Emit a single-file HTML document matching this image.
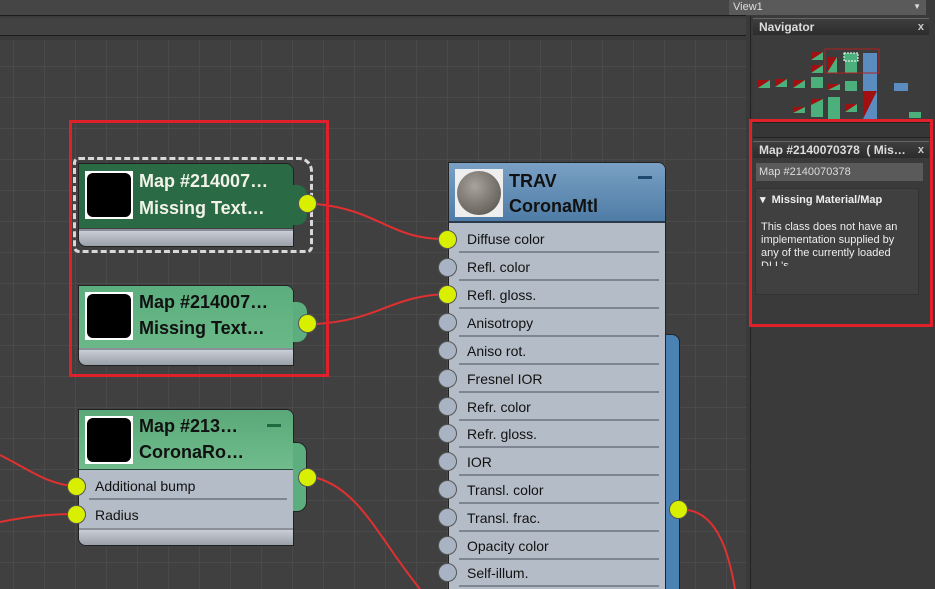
<!DOCTYPE html>
<html style="width:935px;height:589px;overflow:hidden"><head><meta charset="utf-8"><style>
*{margin:0;padding:0;box-sizing:border-box}
body{width:935px;height:589px;overflow:hidden;background:#3a3a3a;font-family:"Liberation Sans",sans-serif;position:relative}
.abs{position:absolute}
#canvas{left:0;top:40px;width:746px;height:549px;background-color:#404040;
background-image:linear-gradient(to right,#4a4a4a 1px,transparent 1px),linear-gradient(to bottom,#4a4a4a 1px,transparent 1px);
background-size:31px 31px;background-position:13px 26px}
.node{position:absolute;border:1px solid #222;border-radius:0 8px 0 8px;overflow:hidden}
.hdr{position:absolute;left:0;right:0;top:0}
.thumb{position:absolute;left:6px;top:7px;width:48px;height:48px;background:#fff;padding:2px}
.thumb div{width:100%;height:100%;background:#000;border-radius:6px}
.t{position:absolute;left:60px;font-weight:bold;font-size:18px;line-height:27px;white-space:nowrap}
.foot{position:absolute;left:0;right:0;height:17px;background:linear-gradient(#c9ced5,#9aa0a8);border-top:2px solid #8a9099}
.sock{position:absolute;width:19px;height:19px;border-radius:50%;border:1px solid #555}
.y{background:#d8f000}
.g{background:#a8b4c4}
.row{position:absolute;left:0;right:0;height:28px;font-size:14px;color:#111;padding-left:8px;line-height:28px;border-bottom:2px solid #7c8590;margin:0 6px 0 10px}
.ph{position:absolute;left:0;right:0;height:17px;background:linear-gradient(#3e3e3e,#2c2c2c);color:#ddd;font-size:12px;font-weight:bold;padding-left:6px;line-height:16px;border-top:1px solid #666}
.x{position:absolute;right:5px;top:0;font-size:11px;color:#ccc}
</style></head><body>
<div class="abs" style="left:0;top:0;width:746px;height:16px;background:#454545;border-bottom:1px solid #1c1c1c"></div>
<div class="abs" style="left:0;top:18px;width:746px;height:18px;background:#424242;border-bottom:1px solid #1c1c1c"></div>
<div class="abs" style="left:729px;top:0;width:197px;height:15px;background:#5a5a5a;color:#ddd;font-size:11px;padding-left:4px;line-height:14px">View1<span style="position:absolute;right:5px;font-size:8px">▼</span></div>
<div id="canvas" class="abs"></div>

<svg class="abs" style="left:0;top:0" width="746" height="589">
<g fill="none" stroke="#e03030" stroke-width="2">
<path d="M316 204 C380 210 390 240 447 239"/>
<path d="M316 324 C380 320 390 296 447 294"/>
<path d="M0 455 C30 470 50 486 77 486"/>
<path d="M0 522 C30 516 50 514 77 514"/>
<path d="M317 478 C360 490 380 540 420 589"/>
<path d="M688 510 C720 515 730 560 735 589"/>
</g></svg>

<div class="abs" style="left:73px;top:157px;width:240px;height:96px;border:3px dashed #d8d8d8;border-radius:6px 14px 6px 6px"></div>
<div class="node" style="left:78px;top:163px;width:216px;height:84px">
<div class="hdr" style="height:64px;background:#2a6a45"></div>
<div class="thumb"><div></div></div>
<div class="t" style="top:4px;color:#f2f2e8">Map #214007…</div>
<div class="t" style="top:31px;color:#f2f2e8">Missing Text…</div>
<div class="foot" style="top:65px"></div>
</div>
<div class="abs" style="left:293px;top:185px;width:14px;height:40px;background:#2a6a45;border-radius:0 10px 10px 0"></div>
<div class="sock y" style="left:298px;top:194px"></div>

<div class="node" style="left:78px;top:285px;width:216px;height:81px">
<div class="hdr" style="height:62px;background:linear-gradient(#5cae7e,#6ab888)"></div>
<div class="thumb" style="top:6px"><div></div></div>
<div class="t" style="top:3px;color:#111">Map #214007…</div>
<div class="t" style="top:29px;color:#111">Missing Text…</div>
<div class="foot" style="top:62px"></div>
</div>
<div class="abs" style="left:293px;top:302px;width:14px;height:40px;background:#5cae7e;border-radius:0 10px 10px 0"></div>
<div class="sock y" style="left:298px;top:314px"></div>

<div class="node" style="left:78px;top:409px;width:216px;height:137px;background:#b4bcc7">
<div class="hdr" style="height:60px;background:linear-gradient(#5aa878,#70bc8c);border-bottom:1px solid #2a4a3a"></div>
<div class="thumb" style="top:6px"><div></div></div>
<div class="t" style="top:3px;color:#111">Map #213…</div>
<div class="t" style="top:29px;color:#111">CoronaRo…</div>
<div class="abs" style="left:188px;top:14px;width:14px;height:3px;background:#1e6a40"></div>
<div class="row" style="top:62px;padding-left:6px">Additional bump</div>
<div class="row" style="top:91px;border-bottom:none;padding-left:6px">Radius</div>
<div class="foot" style="top:118px"></div>
</div>
<div class="abs" style="left:293px;top:442px;width:14px;height:70px;background:#5cae7e;border-radius:0 10px 10px 0;border:1px solid #222;border-left:none"></div>
<div class="sock y" style="left:298px;top:468px"></div>
<div class="sock y" style="left:67px;top:477px"></div>
<div class="sock y" style="left:67px;top:505px"></div>

<div class="abs" style="left:662px;top:334px;width:18px;height:260px;background:#4a82b4;border:1px solid #222;border-radius:0 8px 0 0"></div>
<div class="node" style="left:448px;top:162px;width:218px;height:440px;background:#b4bcc7">
<div class="hdr" style="height:60px;background:linear-gradient(#7aa0c4,#4e7ca6);border-bottom:2px solid #2a3a4a"></div>
<div class="thumb" style="top:6px;background:#eee"><div style="border-radius:50%;background:radial-gradient(circle at 40% 35%,#a8a49c,#6a6660 70%,#3a3836)"></div></div>
<div class="t" style="top:5px;color:#111">TRAV</div>
<div class="t" style="top:30px;color:#111">CoronaMtl</div>
<div class="abs" style="left:189px;top:13px;width:14px;height:3px;background:#1e4a70"></div>
<div class="row" style="top:62px">Diffuse color</div>
<div class="row" style="top:90px">Refl. color</div>
<div class="row" style="top:118px">Refl. gloss.</div>
<div class="row" style="top:146px">Anisotropy</div>
<div class="row" style="top:174px">Aniso rot.</div>
<div class="row" style="top:202px">Fresnel IOR</div>
<div class="row" style="top:230px">Refr. color</div>
<div class="row" style="top:257px">Refr. gloss.</div>
<div class="row" style="top:285px">IOR</div>
<div class="row" style="top:313px">Transl. color</div>
<div class="row" style="top:341px">Transl. frac.</div>
<div class="row" style="top:369px">Opacity color</div>
<div class="row" style="top:396px">Self-illum.</div>
</div>
<div class="sock y" style="left:438px;top:230px"></div>
<div class="sock g" style="left:438px;top:258px"></div>
<div class="sock y" style="left:438px;top:285px"></div>
<div class="sock g" style="left:438px;top:313px"></div>
<div class="sock g" style="left:438px;top:341px"></div>
<div class="sock g" style="left:438px;top:369px"></div>
<div class="sock g" style="left:438px;top:397px"></div>
<div class="sock g" style="left:438px;top:424px"></div>
<div class="sock g" style="left:438px;top:452px"></div>
<div class="sock g" style="left:438px;top:480px"></div>
<div class="sock g" style="left:438px;top:508px"></div>
<div class="sock g" style="left:438px;top:536px"></div>
<div class="sock g" style="left:438px;top:563px"></div>
<div class="sock y" style="left:669px;top:500px"></div>

<div class="abs" style="left:750px;top:16px;width:185px;height:573px;background:#3a3a3a;border-left:1px solid #222"></div>
<div class="ph" style="left:753px;top:18px;width:176px">Navigator<span class="x">x</span></div>
<div class="abs" style="left:753px;top:35px;width:176px;height:85px;background:#3c3c3c"></div>
<svg class="abs" style="left:753px;top:35px" width="176" height="85">
<g fill="#4cb07c">
<rect x="5" y="45" width="12" height="8"/><rect x="22" y="44" width="12" height="8"/><rect x="40" y="45" width="12" height="8"/>
<rect x="58" y="17" width="12" height="8"/><rect x="58" y="30" width="12" height="8"/><rect x="58" y="42" width="12" height="11"/>
<rect x="74" y="22" width="10" height="16"/><rect x="92" y="22" width="12" height="16"/><rect x="92" y="46" width="12" height="10"/>
<rect x="75" y="49" width="12" height="6"/><rect x="58" y="64" width="12" height="18"/><rect x="75" y="62" width="12" height="22"/>
<rect x="40" y="72" width="12" height="6"/><rect x="92" y="69" width="12" height="8"/><rect x="156" y="77" width="12" height="6"/>
</g>
<g fill="#a01010"><polygon points="5,45 17,45 5,53"/><polygon points="22,44 34,44 22,52"/><polygon points="40,45 52,45 40,53"/><polygon points="58,17 70,17 58,25"/><polygon points="58,30 70,30 58,38"/><polygon points="74,22 84,22 74,38"/><polygon points="75,49 87,49 75,55"/><polygon points="58,64 70,64 58,70"/><polygon points="40,72 52,72 40,78"/><polygon points="92,69 104,69 92,77"/></g>
<rect x="110" y="18" width="14" height="66" fill="#5a8cc0"/><rect x="141" y="48" width="14" height="8" fill="#5a8cc0"/>
<polygon points="110,56 124,56 110,84" fill="#a01010"/>
<rect x="72" y="14" width="54" height="24" fill="none" stroke="#b02020"/>
<rect x="91" y="18" width="14" height="8" fill="#4cb07c" stroke="#fff" stroke-dasharray="2 1"/>
</svg>
<div class="abs" style="left:753px;top:122px;width:178px;height:16px;background:#363636;border-top:1px solid #222;border-bottom:1px solid #222"></div>
<div class="ph" style="left:753px;top:141px;width:176px">Map #2140070378&nbsp; ( Mis…<span class="x">x</span></div>
<div class="abs" style="left:756px;top:163px;width:167px;height:18px;background:#5a5a5a;color:#ddd;font-size:11px;padding-left:3px;line-height:18px">Map #2140070378</div>
<div class="abs" style="left:755px;top:188px;width:164px;height:107px;background:#404040;border:1px solid #333;color:#eee;font-size:11px">
<div style="font-weight:bold;font-size:11px;padding:4px 0 0 4px">▾&nbsp; Missing Material/Map</div>
<div style="margin:15px 0 0 5px;line-height:13px;height:45px;width:140px;overflow:hidden">This class does not have an implementation supplied by any of the currently loaded DLL's</div>
</div>

<div class="abs" style="left:69px;top:120px;width:260px;height:257px;border:3px solid #e0202a"></div>
<div class="abs" style="left:749px;top:119px;width:184px;height:208px;border:3px solid #e0202a"></div>
</body></html>
